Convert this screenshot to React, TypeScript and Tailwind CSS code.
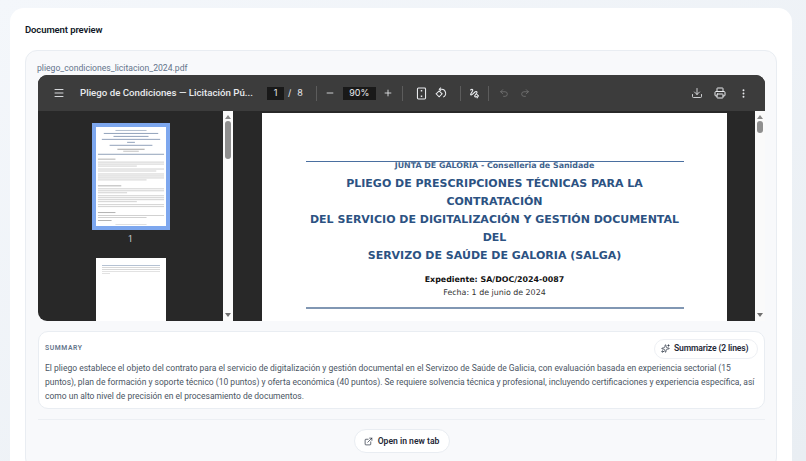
import { Download, ExternalLink, Menu, Minus, MoreVertical, Plus, Printer, Redo2, Sparkles, Undo2 } from "lucide-react";

const titleLines = [
  "PLIEGO DE PRESCRIPCIONES TÉCNICAS PARA LA",
  "CONTRATACIÓN",
  "DEL SERVICIO DE DIGITALIZACIÓN Y GESTIÓN DOCUMENTAL",
  "DEL",
  "SERVIZO DE SAÚDE DE GALORIA (SALGA)",
];

// thumbnail text rows: y, x, width, colour
const thumbRows: [number, number, number, string][] = [
  [3, 20, 32, "#a9b6c8"],
  [6, 8, 56, "#8497b3"],
  [9, 18, 36, "#8497b3"],
  [12, 6, 60, "#8497b3"],
  [15, 32, 8, "#8497b3"],
  [18, 14, 44, "#8497b3"],
  [22, 22, 28, "#999999"],
  [24, 28, 16, "#bbbbbb"],
  [27, 2, 68, "#a3b1c5"],
  [32, 2, 18, "#aaaaaa"],
  [35, 2, 68, "#cccccc"],
  [37, 2, 68, "#cccccc"],
  [39, 2, 40, "#cccccc"],
  [42, 2, 68, "#cccccc"],
  [44, 2, 60, "#cccccc"],
  [47, 2, 68, "#cccccc"],
  [49, 2, 68, "#cccccc"],
  [51, 2, 68, "#cccccc"],
  [53, 2, 50, "#cccccc"],
  [59, 2, 24, "#aaaaaa"],
  [62, 2, 68, "#cccccc"],
  [64, 2, 68, "#cccccc"],
  [66, 2, 30, "#cccccc"],
  [69, 2, 68, "#cccccc"],
  [71, 2, 68, "#cccccc"],
  [73, 2, 68, "#cccccc"],
  [75, 2, 40, "#cccccc"],
  [78, 2, 68, "#cccccc"],
  [80, 2, 68, "#cccccc"],
  [86, 2, 18, "#aaaaaa"],
  [89, 2, 68, "#cccccc"],
  [91, 2, 50, "#cccccc"],
  [94, 2, 14, "#aaaaaa"],
  [98, 20, 32, "#dddddd"],
];

function Scrollbar({ thumb }: { thumb: string }) {
  return (
    <div className="flex h-full w-[10px] shrink-0 flex-col items-center bg-[#fafafa]">
      <div className="mt-[4px] h-0 w-0 border-x-[3px] border-b-[4px] border-x-transparent border-b-[#8a8a8a]" />
      <div className={`mt-[2px] w-[6px] rounded-full bg-[#8f8f8f] ${thumb}`} />
      <div className="mt-auto mb-[4px] h-0 w-0 border-x-[3px] border-t-[4px] border-x-transparent border-t-[#6f6f6f]" />
    </div>
  );
}

function Sep({ className }: { className: string }) {
  return <div className={`h-[15px] w-px bg-[#5c5c5c] ${className}`} />;
}

export default function App() {
  return (
    <div className="h-[461px] w-[806px] overflow-hidden bg-gradient-to-br from-[#f4f7fb] to-[#e9eef3] pt-2 pl-[10px] font-['Roboto',sans-serif]">
      <div className="h-[470px] w-[782px] rounded-t-[14px] bg-white px-[15px] pt-[15px]">
        <h2 className="text-[9.5px] leading-[13px] font-semibold tracking-[-0.1px] text-[#111827]">
          Document preview
        </h2>

        <div className="mt-[14px] h-[420px] w-[752px] rounded-xl border border-[#e9edf2] bg-[#f8f9fb] px-3 pt-[11px]">
          <div className="-ml-px text-[8.65px] leading-[13px] text-[#64748b]">pliego_condiciones_licitacion_2024.pdf</div>

          {/* PDF viewer */}
          <div className="h-[246px] w-[727px] overflow-hidden rounded-t-[9px] rounded-bl-[9px] bg-[#282828]">
            <div className="flex h-[36px] items-center bg-[#3c3c3c] pr-[16px] text-[#e8eaed] font-['Inter',sans-serif]">
              <Menu className="ml-[15px] size-[12px] shrink-0" strokeWidth={1.8} />
              <div className="ml-[15px] w-[174px] shrink-0 whitespace-nowrap font-['Roboto',sans-serif] text-[9.7px] font-medium">
                Pliego de Condiciones — Licitación Pú...
              </div>
              <div className="ml-[13px] flex h-[13px] w-[17px] shrink-0 items-center justify-center bg-[#191919] text-[9px]">1</div>
              <span className="ml-[4px] text-[9px]">/</span>
              <span className="ml-[6px] text-[9px]">8</span>
              <Sep className="ml-[13px]" />
              <Minus className="ml-[8px] size-[10px]" strokeWidth={2} />
              <div className="ml-[8px] flex h-[13px] w-[33px] shrink-0 items-center justify-center bg-[#191919] text-[9px]">90%</div>
              <Plus className="ml-[7px] size-[10px]" strokeWidth={2} />
              <Sep className="ml-[9px]" />
              <svg viewBox="0 0 12 14" className="ml-[13px] h-[13px] w-[11px]" fill="none" stroke="currentColor" strokeWidth="1.2">
                <rect x="1.6" y="1" width="8.8" height="12" rx="1" />
                <path d="M6 3.2v1.6M6 9.2v1.6" strokeWidth="1.6" />
              </svg>
              <svg viewBox="0 0 14 14" className="ml-[8px] size-[12px]" fill="none" stroke="currentColor" strokeWidth="1.2">
                <path d="M1.300 8 L4.800 4.500 L8.300 8 L4.800 11.500 Z" />
                <path d="M5.500 2.600 H8 a4.800 4.800 0 0 1 1.500 9.200" />
                <path d="M7 .8 L5 2.600 L7 4.400" />
              </svg>
              <Sep className="ml-[13px]" />
              <svg viewBox="0 0 14 14" className="ml-[8px] size-[11px]" fill="none" stroke="currentColor" strokeWidth="1.4" strokeLinecap="round">
                <path d="M2 2.500c2-1.500 3.500-.5 2.500 1.200L2.200 7.500c-.6 1.500.8 1.600 2 .6L8 4.800c1.500-1 2.800.4 1.800 1.700L7.500 9.500c-1 1.600.7 2.400 2 1.300" />
                <path d="M10 8l2 2-1.800 2.500" />
              </svg>
              <Sep className="ml-[8px]" />
              <Undo2 className="ml-[10px] size-[10px] text-[#7d7d7d]" strokeWidth={1.7} />
              <Redo2 className="ml-[11px] size-[10px] text-[#7d7d7d]" strokeWidth={1.7} />
              <Download className="ml-auto size-[12px]" strokeWidth={1.7} />
              <Printer className="ml-[11px] size-[12px]" strokeWidth={2} />
              <MoreVertical className="ml-[12px] size-[11px]" strokeWidth={2.2} />
            </div>

            <div className="flex h-[210px]">
              {/* thumbnails */}
              <div className="flex w-[185px] shrink-0 flex-col items-center overflow-hidden pt-[12px]">
                <div className="h-[107px] w-[78px] shrink-0 bg-[#7da7ee] p-[4px]">
                  <svg viewBox="0 0 72 100" preserveAspectRatio="none" className="h-full w-full bg-white">
                    {thumbRows.map(([y, x, w, c]) => (
                      <rect key={y} x={x} y={y} width={w} height={y === 27 ? 1.2 : 0.9} fill={c} />
                    ))}
                  </svg>
                </div>
                <div className="mt-[3px] text-[8.5px] leading-[12px] text-[#d4d4d4]">1</div>
                <div className="mt-[13px] h-[100px] w-[70px] shrink-0 bg-white px-[6px] pt-[7px]">
                  <div className="h-px bg-[#b5c2d3]" />
                  <div className="mt-[1px] h-px bg-[#d8d8d8]" />
                  <div className="mt-[1px] h-px bg-[#d8d8d8]" />
                  <div className="mt-[1px] h-px bg-[#e2e2e2]" />
                  <div className="mt-[1px] h-px w-[8px] bg-[#e2e2e2]" />
                </div>
              </div>
              <Scrollbar thumb="h-[38px]" />

              {/* page */}
              <div className="mt-[2px] ml-[29px] h-[208px] w-[465px] shrink-0 bg-white pt-[48px] text-center font-['DejaVu_Sans',sans-serif]">
                <div className="mx-auto w-[378px]">
                  <div className="h-[1px] bg-[#4a6fa0]" />
                  <div className="text-[7.9px] leading-[7px] font-bold text-[#2c5282] opacity-90">
                    JUNTA DE GALORIA - <span className="font-semibold">Conselleria de Sanidade</span>
                  </div>
                  <div className="mt-[6px] whitespace-nowrap text-[11px] leading-[18px] font-bold text-[#2c5282]">
                    {titleLines.map((line) => (
                      <div key={line}>{line}</div>
                    ))}
                  </div>
                  <div className="mt-[8px] text-[7.9px] leading-[13px] font-bold text-[#111111]">
                    Expediente: SA/DOC/2024-0087
                  </div>
                  <div className="text-[7.9px] leading-[13px] text-[#333333]">Fecha: 1 de junio de 2024</div>
                  <div className="mt-[8px] h-[1.5px] bg-[#8197b3]" />
                </div>
              </div>
              <div className="w-[28px] shrink-0" />
              <Scrollbar thumb="h-[12px]" />
            </div>
          </div>

          {/* summary */}
          <div className="mt-[10px] h-[78px] w-[727px] rounded-[10px] border border-[#e9edf2] bg-white px-[6px] pt-[6px]">
            <div className="flex h-[21px] items-center justify-between">
              <span className="text-[6.8px] font-semibold tracking-[0.6px] text-[#64748b]">SUMMARY</span>
              <button className="flex h-[20px] w-[104px] items-center gap-[4px] rounded-full border border-[#eef0f4] bg-white pl-[6px] text-[8.6px] font-semibold tracking-[-0.15px] text-[#1f2937]">
                <Sparkles className="size-[9px]" strokeWidth={1.8} />
                Summarize (2 lines)
              </button>
            </div>
            <p className="mt-[2px] w-[712px] text-[8.5px] leading-[14px] text-[#4b5563]">
              El pliego establece el objeto del contrato para el servicio de digitalización y gestión documental en el Servizoo de Saúde de Galicia, con evaluación basada en experiencia sectorial (15 puntos), plan de formación y soporte técnico (10 puntos) y oferta económica (40 puntos). Se requiere solvencia técnica y profesional, incluyendo certificaciones y experiencia específica, así como un alto nivel de precisión en el procesamiento de documentos.
            </p>
          </div>

          <div className="mt-[10px] h-px w-[727px] bg-[#eceff3]" />

          <div className="mt-[9px] flex w-[727px] justify-center">
            <button className="flex h-[24px] w-[96px] items-center justify-center gap-[5px] rounded-full border border-[#e9edf2] bg-white text-[8.6px] font-semibold text-[#1f2937]">
              <ExternalLink className="size-[9px]" strokeWidth={1.8} />
              Open in new tab
            </button>
          </div>
        </div>
      </div>
    </div>
  );
}
